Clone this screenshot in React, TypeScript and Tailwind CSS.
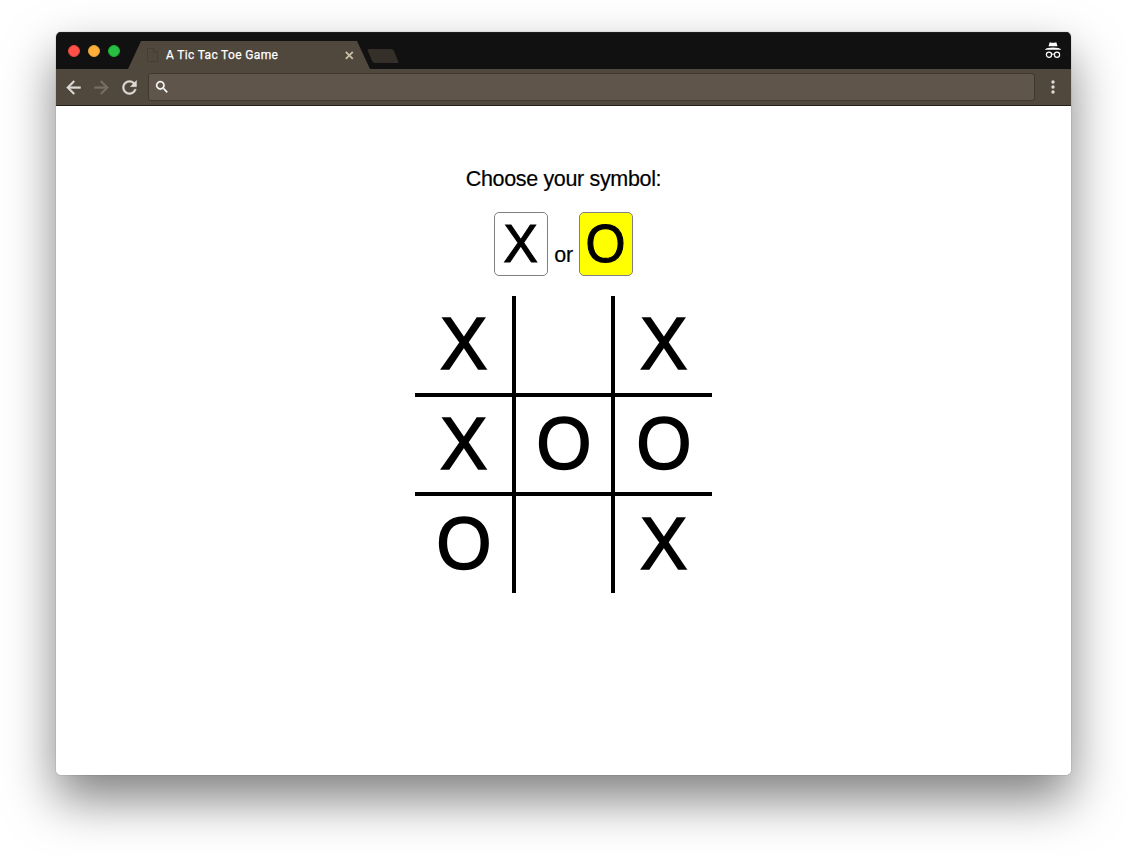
import React, { useState } from "react";

type Mark = "X" | "O" | "";

const initialBoard: Mark[] = ["X", "", "X", "X", "O", "O", "O", "", "X"];

const cellBorders = [
  "border-r-2 border-b-2",
  "border-x-2 border-b-2",
  "border-l-2 border-b-2",
  "border-r-2 border-y-2",
  "border-2",
  "border-l-2 border-y-2",
  "border-r-2 border-t-2",
  "border-x-2 border-t-2",
  "border-l-2 border-t-2",
];

const iconPaths = {
  back: "M20 11H7.830l5.590-5.590L12 4l-8 8 8 8 1.410-1.410L7.830 13H20v-2z",
  forward: "M12 4l-1.410 1.410L16.170 11H4v2h12.170l-5.580 5.590L12 20l8-8z",
  refresh:
    "M17.650 6.350C16.200 4.900 14.210 4 12 4c-4.420 0-7.990 3.580-7.990 8s3.570 8 7.990 8c3.730 0 6.840-2.550 7.730-6h-2.080c-.82 2.330-3.040 4-5.650 4-3.310 0-6-2.690-6-6s2.690-6 6-6c1.660 0 3.140.69 4.220 1.780L13 11h7V4l-2.350 2.350z",
  search:
    "M15.500 14h-.79l-.28-.27C15.410 12.590 16 11.110 16 9.500 16 5.910 13.090 3 9.500 3S3 5.910 3 9.500 5.910 16 9.500 16c1.610 0 3.090-.59 4.230-1.570l.27.28v.79l5 4.990L20.490 19l-4.990-5zm-6 0C7.010 14 5 11.990 5 9.500S7.010 5 9.500 5 14 7.010 14 9.500 11.990 14 9.500 14z",
};

function Icon({ name, size, className = "" }: { name: keyof typeof iconPaths; size: number; className?: string }) {
  return (
    <svg
      width={size}
      height={size}
      viewBox="0 0 24 24"
      fill="currentColor"
      stroke="currentColor"
      strokeWidth="0.5"
      className={`shrink-0 ${className}`}
    >
      <path d={iconPaths[name]} />
    </svg>
  );
}

function TabStrip() {
  return (
    <div className="flex h-[37px] items-end bg-[#111111] shadow-[inset_0_1px_0_#1c1c1c]">
      <div className="flex h-full w-[72px] items-center gap-2 pl-3">
        <span className="h-3 w-3 rounded-full border border-[#e0443e] bg-[#ff5148]" />
        <span className="h-3 w-3 rounded-full border border-[#dea035] bg-[#ffaf3c]" />
        <span className="h-3 w-3 rounded-full border border-[#1eab36] bg-[#28c043]" />
      </div>
      <div className="flex h-7 w-[242px] items-center bg-[#50473d] pl-[19px] pr-4 [clip-path:polygon(13px_0,229px_0,242px_100%,0_100%)]">
        <svg width="11" height="14" viewBox="0 0 11 14" fill="none" stroke="#463e35" strokeWidth="1">
          <path d="M.5.5h6l4 4v9H.5zM6.5.5v4h4" />
        </svg>
        <span className="ml-2 flex-1 whitespace-nowrap font-[Roboto,sans-serif] text-[12px] leading-none tracking-[0.34px] text-white [-webkit-text-stroke:0.25px_white]">
          A Tic Tac Toe Game
        </span>
        <svg width="9" height="9" viewBox="0 0 9 9" stroke="#c9bda9" strokeWidth="1.9">
          <path d="M.8.8l7 7M7.800.8L.8 7.800" />
        </svg>
      </div>
      <div className="mb-1.5 h-[14px] w-[26px] skew-x-[23deg] rounded-[2px] bg-[#352f29]" />
      <svg className="mb-[10px] ml-auto mr-[9px]" width="17" height="17" viewBox="0 0 17 17" fill="none">
        <path d="M4.700.2 6.500.700h3l1.800-.5 1.200 4H3.500zM-.3 7.700c1-1.200 4-2.100 8.300-2.100s7.300.9 8.300 2.100z" fill="#fff" />
        <circle cx="4" cy="12.700" r="2.600" stroke="#fff" strokeWidth="1.200" />
        <circle cx="12" cy="12.700" r="2.600" stroke="#fff" strokeWidth="1.200" />
        <path d="M6.500 12.400q1.500-.8 3 0" stroke="#fff" />
      </svg>
    </div>
  );
}

function Toolbar() {
  return (
    <div className="flex h-[37px] items-center border-b border-[#231f1b] bg-[#50473d] pl-[7px] pr-2 text-[#dedad6]">
      <Icon name="back" size={21} />
      <Icon name="forward" size={21} className="ml-[7px] text-[#776e65]" />
      <Icon name="refresh" size={21} className="ml-[7px]" />
      <div className="ml-2 flex h-7 flex-1 items-center rounded-[3px] border border-[#40372e] bg-[#5f554a] pl-[5px]">
        <Icon name="search" size={16} className="text-white" />
      </div>
      <svg width="20" height="20" viewBox="0 0 20 20" fill="currentColor" className="ml-2">
        <circle cx="10" cy="5" r="1.700" />
        <circle cx="10" cy="10" r="1.700" />
        <circle cx="10" cy="15" r="1.700" />
      </svg>
    </div>
  );
}

export default function App() {
  const [symbol, setSymbol] = useState<"X" | "O">("O");
  const [board, setBoard] = useState<Mark[]>(initialBoard);

  const play = (index: number) => {
    if (board[index]) return;
    setBoard(board.map((mark, i) => (i === index ? symbol : mark)));
  };

  const choice = (value: "X" | "O") => (
    <button
      type="button"
      onClick={() => setSymbol(value)}
      className={`flex h-16 w-[54px] items-center justify-center rounded-[5px] border border-[#808080] pb-px text-[53px] leading-none [-webkit-text-stroke:1.1px_black] ${
        symbol === value ? "bg-[#ffff00]" : "bg-white"
      }`}
    >
      <span className="scale-x-[0.97]">{value}</span>
    </button>
  );

  return (
    <div className="h-[855px] w-[1127px] overflow-hidden bg-white px-14 pt-8">
      <div className="h-[743px] w-[1015px] rounded-[5px] shadow-[0_0_1px_rgba(0,0,0,0.6),0_24px_50px_rgba(0,0,0,0.5)]">
        <div className="flex h-full flex-col overflow-hidden rounded-[5px] bg-white">
          <TabStrip />
          <Toolbar />
          <main className="flex flex-1 flex-col items-center pt-[61px] font-['Liberation_Sans',Arial,sans-serif] text-black">
            <p className="text-[21.5px] leading-6 tracking-[-0.34px] [-webkit-text-stroke:0.2px_black]">Choose your symbol:</p>
            <div className="mt-[21px] flex items-end gap-1.5">
              {choice("X")}
              <span className="mb-[9px] w-[19px] text-center text-[21.5px] leading-6 tracking-[-0.4px] [-webkit-text-stroke:0.2px_black]">
                or
              </span>
              {choice("O")}
            </div>
            <div className="mt-5 grid grid-cols-3">
              {board.map((mark, index) => (
                <button
                  key={index}
                  type="button"
                  onClick={() => play(index)}
                  className={`flex h-[99px] w-[99px] items-center justify-center border-black pb-px text-[74px] leading-none [-webkit-text-stroke:1.6px_black] ${cellBorders[index]}`}
                >
                  <span className="scale-x-[0.96]">{mark}</span>
                </button>
              ))}
            </div>
          </main>
        </div>
      </div>
    </div>
  );
}
